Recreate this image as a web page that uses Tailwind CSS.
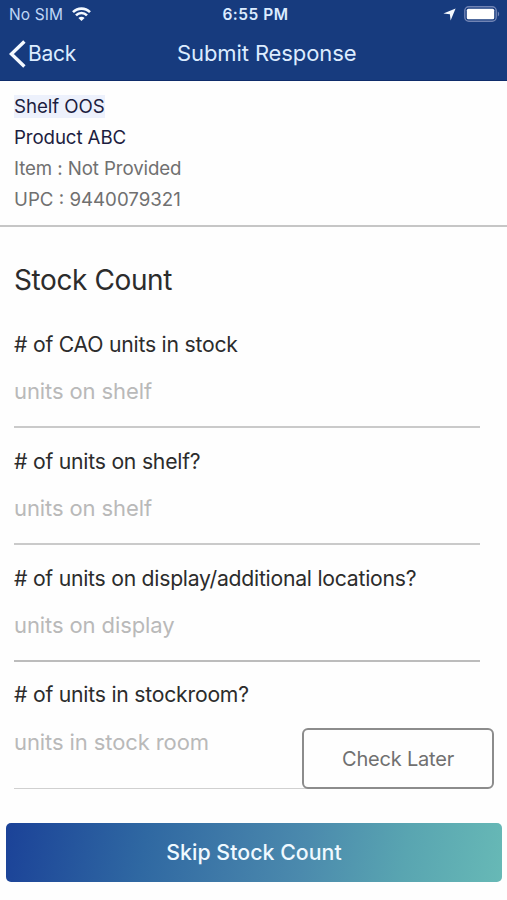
<!DOCTYPE html>
<html lang="en">
<head>
<meta charset="utf-8">
<title>Submit Response</title>
<script src="https://cdn.jsdelivr.net/npm/@tailwindcss/browser@4"></script>
</head>
<body class="bg-[#fefefe] font-['Inter','Liberation_Sans',sans-serif]">
<div class="w-[507px] h-[900px] flex flex-col overflow-hidden">
  <header class="h-[81px] shrink-0 bg-[#173b7e] border-b border-[#0f2c6b] text-[#dcecff]">
    <div class="h-[28px] grid grid-cols-3 items-center pl-[9px] pr-[7px]">
      <div class="flex items-center gap-[9px]">
        <span class="pt-[2px] text-[15.5px] leading-[26px] whitespace-nowrap text-[#bfd6f6]"><span class="tracking-[0.1px]">No SIM</span></span>
        <svg class="w-[19px] h-[14px]" viewBox="0 0 19 14" fill="none" stroke="#f4f9ff" stroke-width="2.6"><path d="M1 5.2C5.8.4 13.2.4 18 5.2"/><path d="M4 8.4c3.1-3.2 7.9-3.2 11 0"/><path d="M6.4 10.9c1.8-1.7 4.4-1.7 6.2 0L9.5 14z" fill="#f4f9ff" stroke="none"/></svg>
      </div>
      <div class="pt-[2px] pl-[2px] text-center text-[15.5px] leading-[26px] font-semibold whitespace-nowrap"><span class="tracking-[0.5px]">6:55 PM</span></div>
      <div class="flex items-center justify-end gap-[8px]">
        <svg class="w-[13px] h-[13px]" viewBox="0 0 13 13" fill="#f4f9ff"><path d="M12.6.4 7.6 12.6 6.9 6.3.4 5.6z"/></svg>
        <svg class="w-[36px] h-[16px]" viewBox="0 0 36 16"><rect x=".8" y=".8" width="31.4" height="14.4" rx="4" fill="none" stroke="#7184b4" stroke-width="1.4"/><rect x="2.8" y="2.8" width="27.4" height="10.4" rx="1.5" fill="#fff"/><path d="M33.8 5.5c1.8.7 1.8 4.3 0 5z" fill="#7184b4"/></svg>
      </div>
    </div>
    <div class="h-[50px] grid grid-cols-[168px_auto_1fr] items-center pl-[9px] pr-[5px]">
      <div class="flex items-center gap-[2px]">
        <svg class="mt-[2px] w-[17px] h-[28px]" viewBox="0 0 17 28" fill="none" stroke="#f4f9ff" stroke-width="3.4"><path d="M15.4 1.6 2.4 14l13 12.4"/></svg>
        <span class="pt-[2px] text-[21px] leading-[30px]"><span class="tracking-[-0.3px]">Back</span></span>
      </div>
      <h1 class="text-[22px] leading-[30px] whitespace-nowrap"><span class="tracking-[-0.1px]">Submit Response</span></h1>
      <div></div>
    </div>
  </header>
  <section class="h-[146px] shrink-0 border-b-2 border-[#c6c6c6] px-[14px] pt-[10px] text-[18.7px] leading-[31px] text-[#707070]">
    <p class="text-[#1c1d40]"><span class="bg-[#edf1fc] tracking-[-0.05px]">Shelf OOS</span></p>
    <p class="text-[#1c1d40]"><span class="tracking-[-0.1px]">Product ABC</span></p>
    <p><span class="tracking-[-0.1px]">Item : Not Provided</span></p>
    <p><span class="tracking-[0px]">UPC : 9440079321</span></p>
  </section>
  <main class="pl-[14px] pr-[27px] pt-[33px] text-[21.2px] leading-[30px] text-[#2c2c2c] whitespace-nowrap">
    <h2 class="text-[28px] leading-10 mb-[29px]"><span class="tracking-[-0.4px]">Stock Count</span></h2>
    <div class="h-[99px] border-b-2 border-[#cacaca]">
      <p><span class="tracking-[-0.23px]">#&nbsp;of CAO units in stock</span></p>
      <p class="mt-[17px] text-[22px] text-[#b9b9b9]"><span class="tracking-[-0.1px]">units on shelf</span></p>
    </div>
    <div class="mt-[18px] h-[99px] border-b-2 border-[#cacaca]">
      <p><span class="tracking-[-0.23px]">#&nbsp;of units on shelf?</span></p>
      <p class="mt-[17px] text-[22px] text-[#b9b9b9]"><span class="tracking-[-0.1px]">units on shelf</span></p>
    </div>
    <div class="mt-[18px] h-[99px] border-b-2 border-[#bcbcbc]">
      <p><span class="tracking-[-0.25px]">#&nbsp;of units on display/additional locations?</span></p>
      <p class="mt-[17px] text-[22px] text-[#b9b9b9]"><span class="tracking-[-0.1px]">units on display</span></p>
    </div>
    <div class="mt-[17px] h-[110px] border-b border-[#d0d0d0] relative">
      <p><span class="tracking-[-0.23px]">#&nbsp;of units in stockroom?</span></p>
      <p class="mt-[18px] text-[22px] text-[#b9b9b9]"><span class="tracking-[-0.1px]">units in stock room</span></p>
      <button class="absolute left-[288px] bottom-[-1px] w-[192px] h-[61px] rounded-[6px] border-2 border-[#8c8c8c] bg-[#fefefe] text-[20px] text-[#707070]"><span class="tracking-[-0.2px]">Check Later</span></button>
    </div>
  </main>
  <button class="mt-[34px] ml-[6px] mr-[5px] h-[59px] shrink-0 rounded-[5px] bg-[linear-gradient(100deg,#1b4298_0%,#2f68a2_28%,#3f7aa8_45%,#4b8aad_60%,#59a5b1_80%,#67b9b6_100%)] text-[21.3px] font-medium text-[#eff9ff]"><span class="tracking-[0.05px]">Skip Stock Count</span></button>
</div>
</body>
</html>
